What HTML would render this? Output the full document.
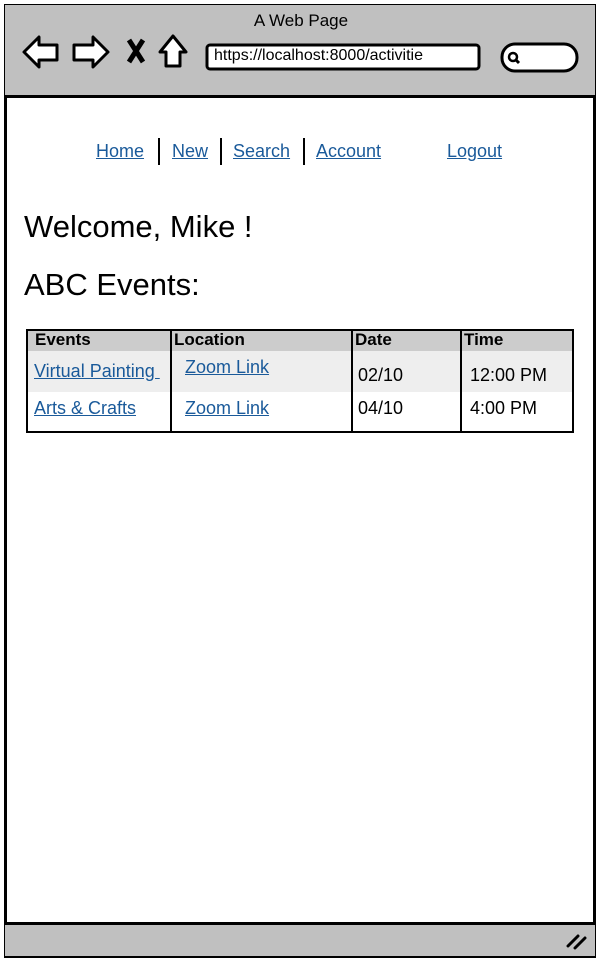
<!DOCTYPE html>
<html><head><meta charset="utf-8"><style>
*{margin:0;padding:0;box-sizing:border-box}
body{width:602px;height:964px;background:#fff;font-family:"Liberation Sans",sans-serif;position:relative;overflow:hidden}
.abs{position:absolute}
a{color:#1a5a9a;text-decoration:underline}
.nav a{position:absolute;top:141px;font-size:18px}
.sep{position:absolute;top:138px;width:2px;height:27px;background:#000}
.t{position:absolute;font-size:18px;color:#000}
.h{font-size:17px;font-weight:bold}
</style></head><body>
<div class="abs" style="left:4px;top:4px;width:592px;height:954px;border:3px solid #000;background:#fff"></div>
<div class="abs" style="left:5px;top:5px;width:590px;height:93px;background:#c0c0c0;border-bottom:3px solid #000"></div>
<div class="abs" style="left:5px;top:922px;width:590px;height:34px;background:#c0c0c0;border-top:3px solid #000"></div>
<div class="abs" style="left:0;top:11px;width:602px;text-align:center;font-size:17px">A Web Page</div>
<svg class="abs" style="left:0;top:0" width="602" height="100">
<g fill="#fff" stroke="#000" stroke-width="3" stroke-linejoin="round">
<path d="M24 52 L39 37 L39 45 L57 45 L57 60 L39 60 L39 67 Z"/>
<path d="M108 52 L93 37 L93 45 L74 45 L74 60 L93 60 L93 67 Z"/>
<path d="M160 52 L173 36 L186 52 L180 52 L180 66 L166 66 L166 52 Z"/>
<rect x="207" y="45" width="272" height="24" rx="3"/>
<rect x="502" y="44" width="75" height="27" rx="13"/>
</g>
<path d="M129 40 L143 62 M143 40 L129 62" stroke="#000" stroke-width="5"/>
<circle cx="513" cy="57" r="4" fill="none" stroke="#000" stroke-width="2.5"/>
<path d="M516 60 L519 63" stroke="#000" stroke-width="3"/>
</svg>
<svg class="abs" style="left:565px;top:930px" width="25" height="20"><path d="M3 16 L13 6 M10 18 L20 8" stroke="#000" stroke-width="3" stroke-linecap="round"/></svg>
<div class="abs" style="left:214px;top:47px;font-size:16px">https://localhost:8000/activitie</div>
<div class="nav">
<a style="left:96px">Home</a><div class="sep" style="left:158px"></div>
<a style="left:172px">New</a><div class="sep" style="left:220px"></div>
<a style="left:233px">Search</a><div class="sep" style="left:303px"></div>
<a style="left:316px">Account</a>
<a style="left:447px">Logout</a>
</div>
<div class="abs" style="left:24px;top:209px;font-size:31px">Welcome, Mike !</div>
<div class="abs" style="left:24px;top:267px;font-size:31px">ABC Events:</div>
<div class="abs" style="left:26px;top:329px;width:548px;height:104px;border:2px solid #000;background:#fff"></div>
<div class="abs" style="left:28px;top:331px;width:544px;height:20px;background:#ccc"></div>
<div class="abs" style="left:28px;top:351px;width:544px;height:41px;background:#eee"></div>
<div class="abs" style="left:170px;top:329px;width:2px;height:104px;background:#000"></div>
<div class="abs" style="left:351px;top:329px;width:2px;height:104px;background:#000"></div>
<div class="abs" style="left:460px;top:329px;width:2px;height:104px;background:#000"></div>
<div class="t h" style="left:35px;top:330px">Events</div>
<div class="t h" style="left:174px;top:330px">Location</div>
<div class="t h" style="left:355px;top:330px">Date</div>
<div class="t h" style="left:464px;top:330px">Time</div>
<a class="t" style="left:34px;top:361px;color:#1a5a9a">Virtual Painting&nbsp;</a>
<a class="t" style="left:185px;top:357px;color:#1a5a9a">Zoom Link</a>
<div class="t" style="left:358px;top:365px">02/10</div>
<div class="t" style="left:470px;top:365px">12:00 PM</div>
<a class="t" style="left:34px;top:398px;color:#1a5a9a">Arts &amp; Crafts</a>
<a class="t" style="left:185px;top:398px;color:#1a5a9a">Zoom Link</a>
<div class="t" style="left:358px;top:398px">04/10</div>
<div class="t" style="left:470px;top:398px">4:00 PM</div>
</body></html>
